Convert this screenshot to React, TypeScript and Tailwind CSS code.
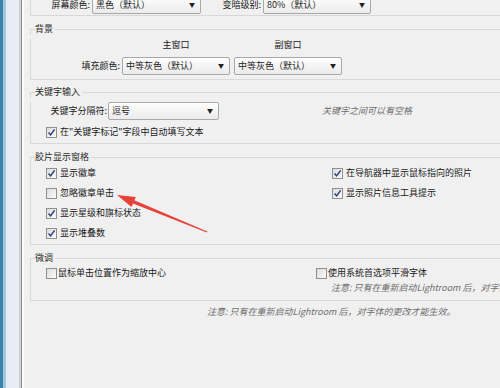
import React from 'react';

const Check = ({ on }: { on?: boolean }) => (
  <span className="w-[11px] h-[11px] shrink-0 border border-[#8f9091] bg-linear-to-br from-[#dcdcdc] to-[#fbfbfb] flex items-center justify-center">
    {on && (
      <svg width="9" height="9" viewBox="0 0 9 9">
        <path d="M1.6 4.6 L3.6 6.9 L7.6 1.4" stroke="#2b3d78" strokeWidth="1.5" fill="none" />
      </svg>
    )}
  </span>
);

const Select = ({ text, className }: { text: string; className: string }) => (
  <div className={`h-[18px] shrink-0 border border-[#a9a9a9] rounded-[2px] bg-linear-to-b from-[#fefefe] to-[#ebebeb] flex items-center pl-[3px] pr-[5px] ${className}`}>
    <span className="flex-1 text-[#1c1c1c]">{text}</span>
    <span className="text-[6px] text-[#222]">▼</span>
  </div>
);

const Row = ({ on, label }: { on?: boolean; label: string }) => (
  <div className="flex items-center h-[20px] gap-[3px]">
    <Check on={on} />
    <span>{label}</span>
  </div>
);

const Group = ({ title, children }: { title: string; children: React.ReactNode }) => (
  <div className="ml-[6px] -mr-[10px]">
    <div className="flex items-center h-[12px]">
      <div className="w-[5px] self-stretch flex flex-col">
        <div className="h-[6px]" />
        <div className="flex-1 border-t border-l border-[#d8d8d8]" />
      </div>
      <span className="pr-[2px] text-[#2a2a2a]">{title}</span>
      <div className="flex-1 border-t border-[#d8d8d8]" />
    </div>
    <div className="border-l border-b border-[#d8d8d8]">{children}</div>
  </div>
);

export default function App() {
  return (
    <div className="w-[500px] h-[388px] overflow-hidden flex bg-[#f0f0f0] text-[9px] leading-[12px] text-[#1a1a1a] font-['Noto_Sans_CJK_SC','Liberation_Sans',sans-serif] relative">
      {/* window frame on the left */}
      <div className="w-[3px] bg-[#3d81a6]" />
      <div className="w-[3px] bg-[#a4c8de]" />
      <div className="w-[13px] bg-[#e6edf5]" />
      <div className="w-[2px] bg-[#cfcfcf]" />
      <div className="w-[1px] bg-[#8c8c8c]" />
      <div className="w-[2px] bg-[#fbfbfb]" />

      <div className="flex-1 min-w-0 overflow-hidden">
        {/* 上一组（被截断） */}
        <div className="ml-[6px] -mr-[10px] -mt-[4px] border-l border-b border-[#d8d8d8]">
          <div className="flex items-start h-[19px]">
            <span className="w-[61px] text-right pr-[2px] leading-[18px]">屏幕颜色:</span>
            <Select text="黑色（默认）" className="w-[109px]" />
            <span className="w-[62px] text-right pr-[2px] leading-[18px]">变暗级别:</span>
            <Select text="80%（默认）" className="w-[108px]" />
          </div>
        </div>

        <div className="mt-[7px]">
          <Group title="背景">
            <div className="flex mt-[4px] h-[12px]">
              <div className="w-[91px]" />
              <span className="w-[108px] text-center">主窗口</span>
              <span className="w-[108px] ml-[4px] text-center">副窗口</span>
            </div>
            <div className="flex items-center mt-[6px] pb-[4px]">
              <span className="w-[91px] text-right pr-[2px]">填充颜色:</span>
              <Select text="中等灰色（默认）" className="w-[108px]" />
              <Select text="中等灰色（默认）" className="w-[108px] ml-[4px]" />
            </div>
          </Group>
        </div>

        <div className="mt-[6px]">
          <Group title="关键字输入">
            <div className="flex items-center mt-[4px]">
              <span className="w-[77px] text-right pr-[1px]">关键字分隔符:</span>
              <Select text="逗号" className="w-[111px]" />
              <span className="ml-[103px] italic text-[#6e6e6e]">关键字之间可以有空格</span>
            </div>
            <div className="pl-[15px] mt-[3px] pb-[2px]">
              <div className="flex items-center h-[18px] gap-[3px]">
                <Check on />
                <span>{'在"关键字标记"字段中自动填写文本'}</span>
              </div>
            </div>
          </Group>
        </div>

        <div className="mt-[7px]">
          <Group title="胶片显示窗格">
            <div className="flex pb-[1px]">
              <div className="w-[301px] shrink-0 pl-[15px]">
                <Row on label="显示徽章" />
                <Row label="忽略徽章单击" />
                <Row on label="显示星级和旗标状态" />
                <Row on label="显示堆叠数" />
              </div>
              <div>
                <Row on label="在导航器中显示鼠标指向的照片" />
                <Row on label="显示照片信息工具提示" />
              </div>
            </div>
          </Group>
        </div>

        <div className="mt-[7px]">
          <Group title="微调">
            <div className="flex pb-[6px]">
              <div className="w-[285px] shrink-0 pl-[15px]">
                <div className="flex items-center h-[18px] gap-[1px]">
                  <Check />
                  <span>鼠标单击位置作为缩放中心</span>
                </div>
              </div>
              <div className="min-w-0">
                <div className="flex items-center h-[18px] gap-[1px]">
                  <Check />
                  <span>使用系统首选项平滑字体</span>
                </div>
                <div className="h-[12px] pl-[15px] italic text-[#6e6e6e] whitespace-nowrap">
                  注意: 只有在重新启动Lightroom 后，对字体的更改才能生效。
                </div>
              </div>
            </div>
          </Group>
        </div>

        <div className="mt-[5px] pl-[183px] italic text-[#6e6e6e] whitespace-nowrap">
          注意: 只有在重新启动Lightroom 后，对字体的更改才能生效。
        </div>
      </div>

      {/* red annotation arrow */}
      <svg className="absolute left-0 top-0 pointer-events-none" width="500" height="388">
        <polygon points="117,195 131.5,207 135.8,197" fill="#e8413a" />
        <polygon points="129.2,201.9 130.8,198.7 207.3,231.6 206.8,232.6" fill="#e8413a" />
      </svg>
    </div>
  );
}
